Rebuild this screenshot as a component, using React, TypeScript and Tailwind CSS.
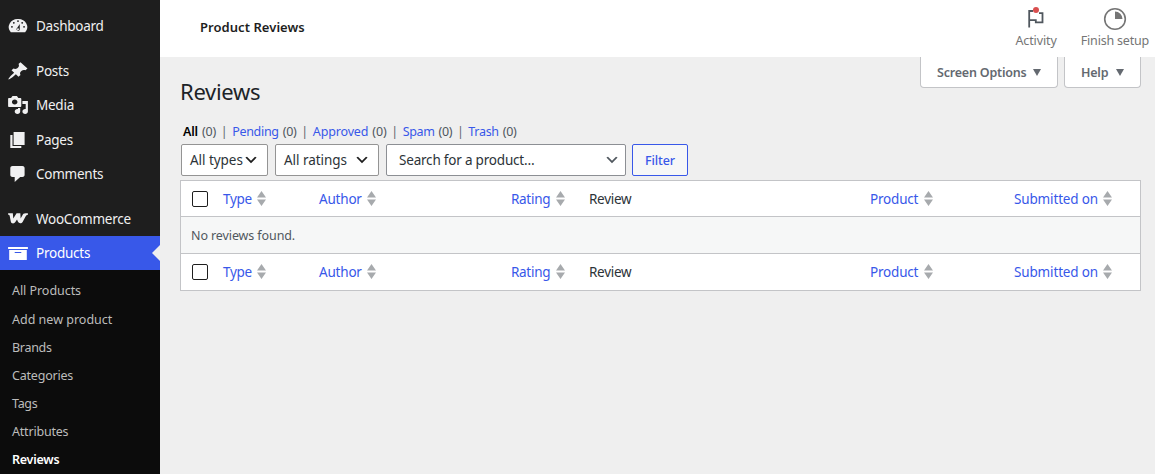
import React from 'react';

const menuItems = [
  {
    label: 'Dashboard',
    className: 'mb-[11px]',
    path: 'M3.5 16.300h13A8.100 8.100 0 0 0 10 3a8.100 8.100 0 0 0-6.500 13.300zM10 4.200a.85.85 0 1 1 0 1.700.85.85 0 0 1 0-1.700zM6.200 6a.85.85 0 1 1 0 1.700.85.85 0 0 1 0-1.700zM13.800 6a.85.85 0 1 1 0 1.700.85.85 0 0 1 0-1.700zM4.500 10a.85.85 0 1 1 0 1.700.85.85 0 0 1 0-1.700zM15.500 10a.85.85 0 1 1 0 1.700.85.85 0 0 1 0-1.700zM9.200 11.900L11.600 8v5.400a1.500 1.500 0 1 1-2.400-1.500zM10.900 13.200a.9.9 0 1 0-1.800 0 .9.9 0 0 0 1.800 0z',
  },
  {
    label: 'Posts',
    className: '',
    path: 'M10.44 3.02l1.82-1.82 6.36 6.35-1.83 1.82c-1.05-.68-2.48-.57-3.41.36l-.75.75c-.92.93-1.04 2.35-.35 3.41l-1.83 1.82-2.41-2.41-2.8 2.79c-.42.42-3.38 2.71-3.8 2.29s1.86-3.39 2.28-3.81l2.79-2.79L4.1 9.36l1.83-1.82c1.05.69 2.48.57 3.4-.36l.75-.75c.93-.92 1.05-2.35.36-3.41z',
  },
  {
    label: 'Media',
    className: 'mb-px',
    path: 'M13 11V4c0-.55-.45-1-1-1h-1.67L9 1H5L3.67 3H2c-.55 0-1 .45-1 1v7c0 .55.45 1 1 1h10c.55 0 1-.45 1-1zM7 4.5c1.38 0 2.5 1.12 2.5 2.5S8.38 9.5 7 9.5 4.5 8.38 4.5 7 5.62 4.5 7 4.5zM14 6h5v10.5c0 1.38-1.12 2.5-2.5 2.5S14 17.88 14 16.5s1.12-2.5 2.5-2.5c.17 0 .34.02.5.05V9h-3V6zm-4 8.05V13h2v3.5c0 1.38-1.12 2.5-2.5 2.5S7 17.88 7 16.5 8.12 14 9.5 14c.17 0 .34.02.5.05z',
  },
  {
    label: 'Pages',
    className: '',
    path: 'M6 15V2h10v13H6zm-1 1h8v2H3V5h2v11z',
  },
  {
    label: 'Comments',
    className: 'mb-[11px]',
    path: 'M5 2h9c1.1 0 2 .9 2 2v7c0 1.1-.9 2-2 2h-2l-5 5v-5H5c-1.1 0-2-.9-2-2V4c0-1.1.9-2 2-2z',
  },
  {
    label: 'WooCommerce',
    className: '',
    path: 'M1 4.200h4.300l.4 5.300 3-5.300h3.400l.3 5.200 2-4C15 4.400 16 4.200 19 4.200v1.500c-1.200.2-1.500.6-2 1.600l-2.800 5.600c-.8 1.700-3.400 1.800-4.200-.1l-.9-2.300-1.500 2.600c-1 1.800-3.700 1.700-4.100-.3L2.500 7.200C2.300 6 2 5.700 1 5.700z',
  },
  {
    label: 'Products',
    active: true,
    className: 'bg-[#3858e9] text-white',
    path: 'M19 4v2H1V4h18zM2 7h16v10H2V7zm11 3V9H7v1h6z',
  },
];

const subItems = [
  { label: 'All Products', className: 'h-[29px] pb-px tracking-[-0.05px]' },
  { label: 'Add new product', className: 'h-7' },
  { label: 'Brands', className: 'h-7 tracking-[-0.3px]' },
  { label: 'Categories', className: 'h-7 tracking-[-0.2px]' },
  { label: 'Tags', className: 'h-7 tracking-[-0.3px]' },
  { label: 'Attributes', className: 'h-7 tracking-[-0.2px]' },
  { label: 'Reviews', className: 'h-7 font-semibold text-white tracking-[-0.25px]' },
];

const filters = [
  { label: 'All', current: true, className: 'tracking-[-0.2px]' },
  { label: 'Pending', className: 'tracking-[-0.3px]' },
  { label: 'Approved', className: 'tracking-[-0.15px]' },
  { label: 'Spam', className: 'tracking-[-0.35px]' },
  { label: 'Trash', className: 'tracking-[-0.3px]' },
];

const Chevron = ({ className }: { className: string }) => (
  <svg viewBox="0 0 20 20" className={`h-4 w-4 shrink-0 ${className}`} fill="currentColor">
    <path d="M5 6l5 5 5-5 2 1-7 7-7-7 2-1z" />
  </svg>
);

const Caret = () => (
  <svg viewBox="0 0 8 7" className="h-[7px] w-2" fill="currentColor">
    <path d="M0 0h8L4 7z" />
  </svg>
);

const SortArrows = () => (
  <svg viewBox="0 0 9 15" className="mb-px h-[15px] w-[9px] shrink-0" fill="#a7aaad">
    <path d="M4.500 0L9 6.500H0zM4.500 15L0 8.500h9z" />
  </svg>
);

const SortLink = ({ label }: { label: string }) => (
  <a href="#" className="flex items-center justify-between text-[#3858e9]">
    {label}
    <SortArrows />
  </a>
);

const HeadRow = ({ className }: { className: string }) => (
  <div className={`flex items-center text-[13.5px] tracking-[-0.3px] text-[#2c3338] ${className}`}>
    <div className="ml-[11px] h-4 w-4 shrink-0 rounded-[2px] border border-[#1e1e1e] bg-white" />
    <div className="ml-[15px] w-[43px]"><SortLink label="Type" /></div>
    <div className="ml-[53px] w-[57px] tracking-[-0.2px]"><SortLink label="Author" /></div>
    <div className="ml-[135px] w-[54px]"><SortLink label="Rating" /></div>
    <div className="ml-6 w-[281px]">Review</div>
    <div className="w-[63px] tracking-[-0.2px]"><SortLink label="Product" /></div>
    <div className="ml-[81px] w-[98px] tracking-[-0.15px]"><SortLink label="Submitted on" /></div>
  </div>
);

const Sidebar = () => (
  <nav className="h-[474px] w-40 shrink-0 overflow-hidden bg-[#1e1e1e] pt-[9px] text-[13.5px] text-[#f0f0f1]">
    {menuItems.map((item) => (
      <div key={item.label} className={`flex h-[34px] items-center gap-[7px] pl-[7px] ${item.className}`}>
        <svg viewBox="0 0 20 20" preserveAspectRatio="none" className="h-5 w-[22px]" fill="currentColor" fillRule="evenodd">
          <path d={item.path} />
        </svg>
        <span className="tracking-[-0.25px]">{item.label}</span>
        {item.active && (
          <svg viewBox="0 0 8 16" className="ml-auto h-4 w-2" fill="#efefef">
            <path d="M8 0v16L0 8z" />
          </svg>
        )}
      </div>
    ))}
    <div className="h-[210px] bg-[#0c0c0c] pt-[7px] pl-3 text-[12.5px] text-[#bcbcbc]">
      {subItems.map((item) => (
        <div key={item.label} className={`flex items-center ${item.className}`}>
          {item.label}
        </div>
      ))}
    </div>
  </nav>
);

const Header = () => (
  <header className="flex h-[57px] justify-between bg-white pl-10">
    <h1 className="pt-[17px] text-[13px] leading-5 font-semibold tracking-[0.05px] text-[#1e1e1e]">Product Reviews</h1>
    <div className="flex gap-6 pr-1.5 text-[12.5px] leading-4 text-[#757575]">
      <div className="flex flex-col items-center">
        <svg viewBox="0 0 20 24" className="mt-[6px] h-6 w-5" fill="none" stroke="#50575e" strokeWidth="1.8">
          <path d="M3.200 4v17.500M3.200 5H7M3.200 14.100H9.800v2.300h6.700V7.200H13" />
          <circle cx="10" cy="4" r="3" fill="#d94f4f" stroke="none" />
        </svg>
        <span className="mt-[3px] tracking-[-0.1px]">Activity</span>
      </div>
      <div className="flex flex-col items-center">
        <svg viewBox="0 0 24 24" className="mt-[7px] h-6 w-6" fill="none">
          <circle cx="12" cy="12" r="10.300" stroke="#757575" strokeWidth="1.6" />
          <path d="M12 4.500a7.500 7.500 0 0 1 7.500 7.500H12z" fill="#757575" />
        </svg>
        <span className="mt-[2px] tracking-[-0.2px]">Finish setup</span>
      </div>
    </div>
  </header>
);

const App: React.FC = () => {
  return (
    <div className="flex h-[474px] w-[1155px] overflow-hidden bg-[#efefef] font-['Noto_Sans',sans-serif]">
      <Sidebar />
      <main className="flex-1">
        <Header />
        <div className="flex h-[74px] justify-between pr-3.5 pl-5">
          <h2 className="mt-[18px] text-[22px] leading-8 tracking-[-0.3px] text-[#1d2327]">Reviews</h2>
          <div className="flex gap-1.5 text-[12.5px] font-semibold text-[#646970]">
            <div className="flex h-[31px] w-[138px] items-center justify-between rounded-b border border-t-0 border-[#c3c4c7] bg-white px-4">
              <span className="pt-0.5 tracking-[-0.2px]">Screen Options</span>
              <Caret />
            </div>
            <div className="flex h-[31px] w-[77px] items-center justify-between rounded-b border border-t-0 border-[#c3c4c7] bg-white px-4">
              <span className="pt-0.5 tracking-[-0.2px]">Help</span>
              <Caret />
            </div>
          </div>
        </div>

        <div className="pr-3.5 pl-5">
          <ul className="-mt-2 flex h-[18px] items-center pl-[3px] text-[12.5px] text-[#646970]">
            {filters.map((f, i) => (
              <li key={f.label} className={`flex ${f.className}`}>
                {i > 0 && <span className="mx-[4.8px]">|</span>}
                <a href="#" className={f.current ? 'font-semibold text-black' : 'text-[#3858e9]'}>{f.label}</a>
                <span className="ml-1 text-[#50575e]">(0)</span>
              </li>
            ))}
          </ul>

          <div className="mt-[3px] flex h-9 text-[13.5px] text-[#2c3338]">
            <div className="ml-px flex h-8 w-[87px] items-center justify-between rounded-[2px] border border-[#949494] bg-white px-2">
              <span className="pt-px tracking-[-0.05px]">All types</span>
              <Chevron className="text-[#1e1e1e]" />
            </div>
            <div className="ml-[7px] flex h-8 w-[104px] items-center justify-between rounded-[2px] border border-[#949494] bg-white px-2">
              <span className="pt-px tracking-[-0.05px]">All ratings</span>
              <Chevron className="text-[#1e1e1e]" />
            </div>
            <div className="ml-[7px] flex h-8 w-[240px] items-center justify-between rounded-[2px] border border-[#8c8f94] bg-white pr-[5px] pl-3">
              <span className="pt-px tracking-[-0.2px]">Search for a product…</span>
              <Chevron className="text-[#50575e]" />
            </div>
            <button className="ml-1.5 flex h-8 w-14 items-center justify-center rounded-[2px] border border-[#3858e9] bg-[#f6f7f7] pt-0.5 text-[12.5px] font-medium tracking-[-0.1px] text-[#3858e9]">
              Filter
            </button>
          </div>

          <div className="w-[961px] border border-[#c3c4c7] bg-white">
            <HeadRow className="h-[35px] pt-px" />
            <div className="flex h-[38px] items-center border-y border-[#c3c4c7] bg-[#f6f7f7] pt-0.5 pl-2.5 text-[12.5px] tracking-[-0.1px] text-[#50575e]">
              No reviews found.
            </div>
            <HeadRow className="h-9" />
          </div>
        </div>
      </main>
    </div>
  );
};

export default App;
